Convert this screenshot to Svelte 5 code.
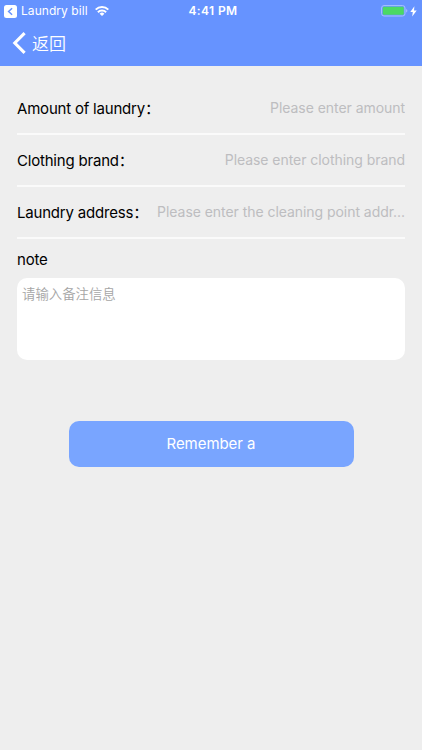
<script lang="ts">
	type Field = { id: string; label: string; placeholder: string; value: string };

	let fields: Field[] = $state([
		{ id: 'amount', label: 'Amount of laundry', placeholder: 'Please enter amount', value: '' },
		{ id: 'brand', label: 'Clothing brand', placeholder: 'Please enter clothing brand', value: '' },
		{
			id: 'address',
			label: 'Laundry address',
			placeholder: 'Please enter the cleaning point addr...',
			value: ''
		}
	]);
	let note = $state('');
</script>

<div class="screen">
	<header>
		<div class="status-bar">
			<div class="status-left">
				<svg class="app-back" viewBox="0 0 13 13" aria-hidden="true">
					<rect width="13" height="13" rx="2.5" fill="#fff" />
					<path d="M8.1 3.2 4.6 6.5l3.5 3.3" fill="none" stroke="#6693ff" stroke-width="1.5" />
				</svg>
				<span class="app-name">Laundry bill</span>
				<svg class="wifi" viewBox="0 0 14 10" aria-hidden="true">
					<g fill="none" stroke="#fff" stroke-width="2">
						<path d="M.7 3.6a9 9 0 0 1 12.6 0" />
						<path d="M2.9 6.2a5.8 5.8 0 0 1 8.2 0" />
					</g>
					<path d="M4.6 7.8a3.4 3.4 0 0 1 4.8 0L7 10z" fill="#fff" />
				</svg>
			</div>
			<span class="time">4:41 PM</span>
			<div class="status-right">
				<svg class="battery" viewBox="0 0 27 12" aria-hidden="true">
					<rect x=".6" y=".6" width="23.4" height="10.4" rx="2.4" fill="none" stroke="#a9c2ff" />
					<rect x="1.8" y="1.8" width="21" height="8" rx="1.2" fill="#4bd964" />
					<path d="M25.2 4.1c1.6.5 1.6 2.9 0 3.4z" fill="#a9c2ff" />
				</svg>
				<svg class="bolt" viewBox="0 0 7 11" aria-hidden="true">
					<path d="M4.4.3.3 6h2.5l-.6 4.4L6.7 4.5H4z" fill="#fff" />
				</svg>
			</div>
		</div>
		<button class="back" type="button">
			<svg viewBox="0 0 14 22" aria-hidden="true">
				<path d="M12.6 1.2 2.8 11l9.8 9.8" fill="none" stroke="#fff" stroke-width="3.1" />
			</svg>
			<span>返回</span>
		</button>
	</header>

	<form onsubmit={(e) => e.preventDefault()}>
		{#each fields as field (field.id)}
			<div class="row">
				<label for={field.id}>{field.label}<span class="colon">&#xff1a;</span></label>
				<input id={field.id} placeholder={field.placeholder} bind:value={field.value} />
			</div>
		{/each}

		<label class="note-label" for="note">note</label>
		<textarea id="note" placeholder="请输入备注信息" bind:value={note}></textarea>

		<button class="submit" type="submit">Remember a</button>
	</form>
</div>

<style>
	:global(body) {
		margin: 0;
		background: #eee;
	}

	.screen {
		min-height: 750px;
		background: #eee;
		color: #000;
		font-family: Inter, 'Noto Sans CJK SC', sans-serif;
	}

	header {
		height: 66px;
		background: #6693ff;
		color: #fff;
	}

	.status-bar {
		display: grid;
		grid-template-columns: 1fr auto 1fr;
		align-items: center;
		height: 22px;
		padding: 0 5px 0 4px;
		font-size: 12px;
	}

	.status-left,
	.status-right {
		display: flex;
		align-items: center;
	}

	.status-right {
		justify-content: flex-end;
		gap: 2px;
	}

	.app-back {
		width: 13px;
		height: 13px;
		margin-right: 4px;
	}

	.app-name {
		padding-bottom: 1px;
		letter-spacing: 0.06px;
	}

	.wifi {
		width: 14px;
		height: 10px;
		margin-left: 7px;
	}

	.time {
		padding: 0 0 1px 5px;
		font-weight: 600;
		letter-spacing: 0.4px;
	}

	.battery {
		width: 27px;
		height: 12px;
	}

	.bolt {
		width: 7px;
		height: 11px;
	}

	.back {
		display: flex;
		align-items: center;
		gap: 6px;
		height: 42px;
		padding: 0 12px;
		border: none;
		background: none;
		color: inherit;
		font-family: inherit;
		font-size: 17px;
		font-weight: 350;
	}

	.back svg {
		width: 14px;
		height: 22px;
	}

	.back span {
		padding-bottom: 1px;
	}

	form {
		display: flex;
		flex-direction: column;
		padding: 17px 17px 0;
	}

	.row {
		display: flex;
		align-items: center;
		height: 50px;
		border-bottom: 2px solid #fafafa;
	}

	label {
		padding-top: 1px;
		font-size: 15px;
		line-height: 20px;
		letter-spacing: -0.2px;
		white-space: nowrap;
	}

	.colon {
		display: inline-block;
		width: 12px;
		font-family: 'Noto Sans CJK SC', sans-serif;
		line-height: 1;
	}

	input {
		flex: 1;
		min-width: 0;
		padding: 0 0 2px;
		border: none;
		outline: none;
		background: none;
		font-family: inherit;
		font-size: 14px;
		letter-spacing: -0.05px;
		text-align: right;
	}

	input::placeholder {
		color: #bdbdc0;
		opacity: 1;
	}

	.note-label {
		margin-top: 10px;
	}

	textarea {
		box-sizing: border-box;
		height: 82px;
		margin-top: 8px;
		padding: 6px 5px;
		border: none;
		border-radius: 10px;
		outline: none;
		resize: none;
		background: #fff;
		font-family: inherit;
		font-size: 13.4px;
		font-weight: 350;
		line-height: 20px;
	}

	textarea::placeholder {
		color: #a5a5a5;
		opacity: 1;
	}

	.submit {
		width: 285px;
		height: 46px;
		margin-top: 61px;
		padding: 0 0 1px;
		align-self: center;
		border: none;
		border-radius: 10px;
		background: #79a5ff;
		color: #fff;
		font-family: inherit;
		font-size: 15px;
		letter-spacing: -0.05px;
	}
</style>
